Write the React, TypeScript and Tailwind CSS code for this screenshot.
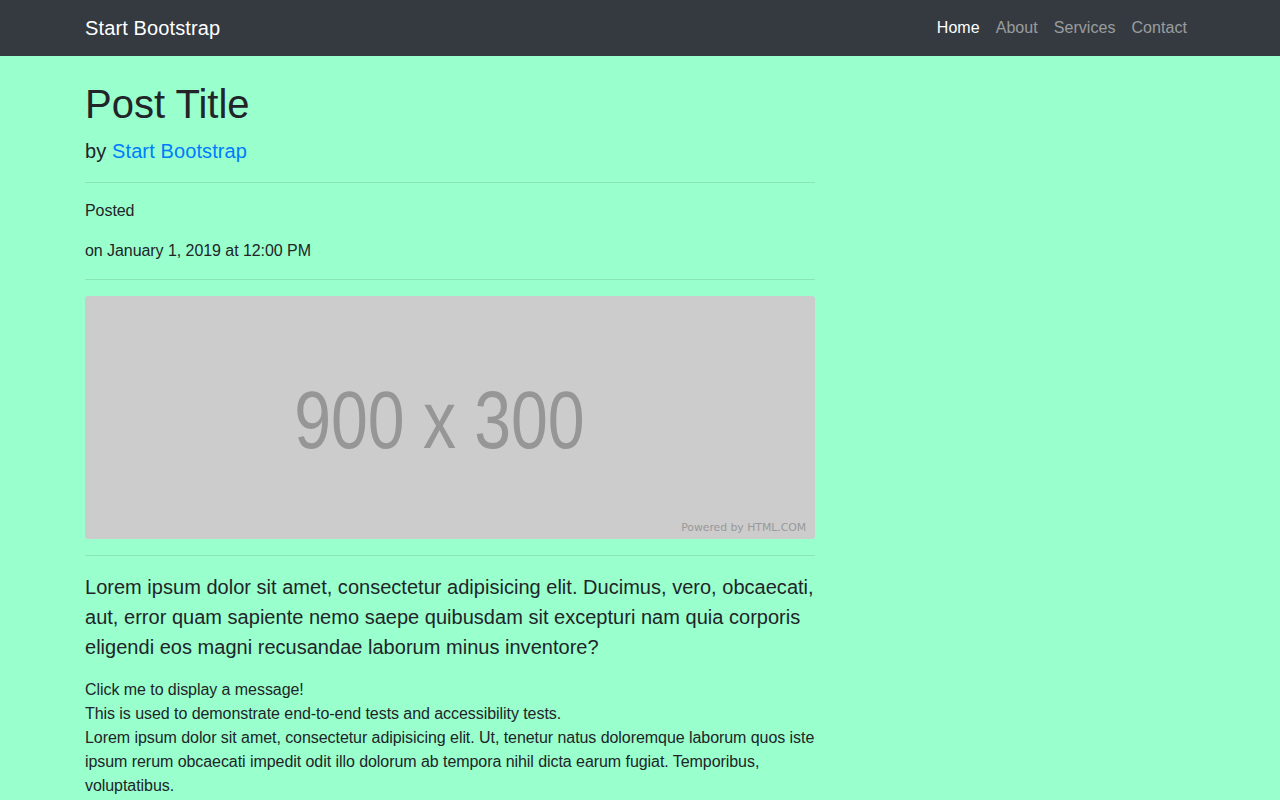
import React from 'react'

const links = ['Home', 'About', 'Services', 'Contact']

const Placeholder: React.FC = () => (
  <div className="rounded overflow-hidden bg-[#cccccc]">
    <svg viewBox="0 0 900 300" className="block w-full h-auto">
      <rect width="900" height="300" fill="#cccccc" />
      <text
        x="258"
        y="187"
        fontSize="100"
        fill="#969696"
        fontFamily="'Liberation Sans', Arial, sans-serif"
        textLength="358"
        lengthAdjust="spacingAndGlyphs"
      >
        900 x 300
      </text>
      <text
        x="735"
        y="290"
        fontSize="14"
        fill="#999999"
        fontFamily="'DejaVu Sans', sans-serif"
        textLength="154"
        lengthAdjust="spacingAndGlyphs"
      >
        Powered by HTML.COM
      </text>
    </svg>
  </div>
)

export default function App() {
  return (
    <div className="min-h-screen bg-[#99ffcc] text-[#212529] text-base leading-normal tracking-[-0.06px] font-['Liberation_Sans',Arial,sans-serif]">
      <nav className="bg-[#343a40] py-2">
        <div className="max-w-[1140px] mx-auto px-[15px] flex items-center justify-between">
          <a href="#" className="text-white text-xl leading-[30px] py-[5px] tracking-[0.12px]">Start Bootstrap</a>
          <ul className="flex tracking-[0.05px]">
            {links.map((l, i) => (
              <li key={l}>
                <a
                  href="#"
                  className={i === 0 ? 'block px-2 py-2 text-white' : 'block px-2 py-2 text-white/50'}
                >
                  {l}
                </a>
              </li>
            ))}
          </ul>
        </div>
      </nav>

      <div className="max-w-[1140px] mx-auto px-[15px]">
        <div className="w-[730px] pb-1">
          <h1 className="mt-6 mb-2 text-[40px] leading-[1.2] font-normal tracking-normal">Post Title</h1>
          <p className="text-xl leading-normal font-light mb-4 tracking-[0.11px]">
            by <a href="#" className="text-[#007bff]">Start Bootstrap</a>
          </p>

          <hr className="my-4 border-t border-black/10" />

          <p className="mb-4">Posted</p>
          <p className="mb-4">on January 1, 2019 at 12:00 PM</p>

          <hr className="my-4 border-t border-black/10" />

          <Placeholder />

          <hr className="my-4 border-t border-black/10" />

          <p className="text-xl leading-normal font-light mb-4 tracking-[0.02px]">
            Lorem ipsum dolor sit amet, consectetur adipisicing elit. Ducimus, vero, obcaecati, aut, error quam sapiente nemo saepe quibusdam sit excepturi nam quia corporis eligendi eos magni recusandae laborum minus inventore?
          </p>

          <div className="cursor-pointer">Click me to display a message!</div>
          <div>This is used to demonstrate end-to-end tests and accessibility tests.</div>
          <p>
            Lorem ipsum dolor sit amet, consectetur adipisicing elit. Ut, tenetur natus doloremque laborum quos iste ipsum rerum obcaecati impedit odit illo dolorum ab tempora nihil dicta earum fugiat. Temporibus, voluptatibus.
          </p>
        </div>
      </div>
    </div>
  )
}
